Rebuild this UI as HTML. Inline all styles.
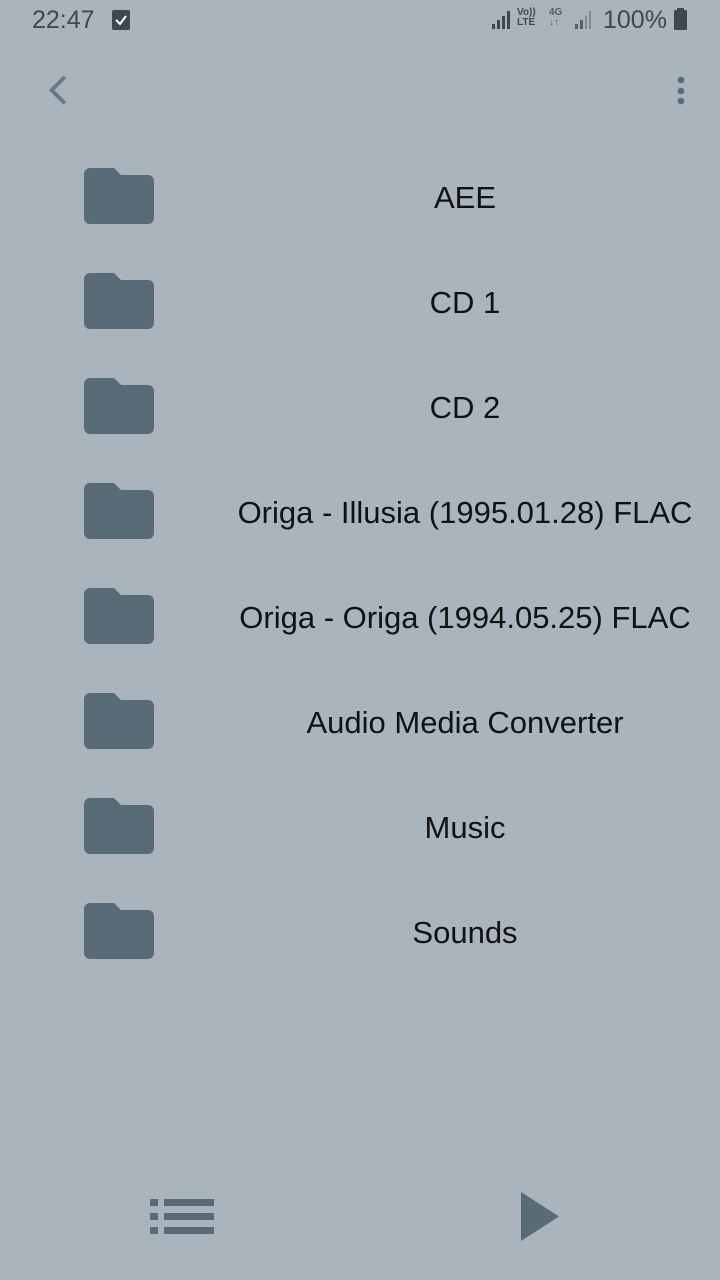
<!DOCTYPE html>
<html><head><meta charset="utf-8"><style>
html,body{margin:0;padding:0}
body{width:720px;height:1280px;background:#a9b4bd;position:relative;overflow:hidden;font-family:"Liberation Sans",sans-serif}
.t{position:absolute;color:#40484f}
.row{position:absolute;left:0;width:720px;height:105px}
.row svg{position:absolute;left:84px;top:17px}
.row span{position:absolute;left:210px;right:0;text-align:center;top:30px;font-size:31px;color:#111;line-height:36px;white-space:nowrap}
</style></head><body>
<div class="t" style="left:32px;top:6px;font-size:25px">22:47</div>
<svg style="position:absolute;left:112px;top:10px" width="18" height="20"><rect x="0" y="0" width="18" height="20" rx="2" fill="#40484f"/><path d="M4 10l4 4 6-8" stroke="#fff" stroke-width="2" fill="none"/></svg>
<svg style="position:absolute;left:490px;top:8px" width="22" height="22" fill="#40484f"><rect x="2" y="16" width="3" height="5"/><rect x="7" y="12" width="3" height="9"/><rect x="12" y="8" width="3" height="13"/><rect x="17" y="3" width="3" height="18"/></svg>
<div class="t" style="left:517px;top:8px;font-size:10px;line-height:10px;font-weight:bold">Vo))<br>LTE</div>
<div class="t" style="left:549px;top:8px;font-size:10px;line-height:10px;font-weight:bold;color:#55606a">4G<br>↓↑</div>
<svg style="position:absolute;left:573px;top:8px" width="22" height="22" fill="#55606a"><rect x="2" y="16" width="3" height="5"/><rect x="7" y="12" width="3" height="9"/><rect x="12" y="8" width="2" height="13" opacity=".5"/><rect x="16" y="3" width="2" height="18" opacity=".5"/></svg>
<div class="t" style="left:603px;top:6px;font-size:25px">100%</div>
<svg style="position:absolute;left:673px;top:8px" width="16" height="24" fill="#40484f"><rect x="4" y="0" width="7" height="3"/><rect x="1" y="2" width="13" height="20" rx="1"/></svg>
<svg style="position:absolute;left:46px;top:74px" width="26" height="34"><path d="M22 4L8 18l14 14" stroke="#677985" stroke-width="4" fill="none" transform="translate(-2,-1) scale(0.95)"/></svg>
<svg style="position:absolute;left:674px;top:76px" width="14" height="30" fill="#5a6b78"><circle cx="7" cy="4" r="3.3"/><circle cx="7" cy="15" r="3.3"/><circle cx="7" cy="25" r="3.3"/></svg>

<div class="row" style="top:150px"><svg width="70" height="57"><path d="M6 1h24l7 7h27a6 6 0 0 1 6 6v37a6 6 0 0 1-6 6H6a6 6 0 0 1-6-6V7a6 6 0 0 1 6-6z" fill="#5a6b78"/></svg><span>AEE</span></div>
<div class="row" style="top:255px"><svg width="70" height="57"><path d="M6 1h24l7 7h27a6 6 0 0 1 6 6v37a6 6 0 0 1-6 6H6a6 6 0 0 1-6-6V7a6 6 0 0 1 6-6z" fill="#5a6b78"/></svg><span>CD 1</span></div>
<div class="row" style="top:360px"><svg width="70" height="57"><path d="M6 1h24l7 7h27a6 6 0 0 1 6 6v37a6 6 0 0 1-6 6H6a6 6 0 0 1-6-6V7a6 6 0 0 1 6-6z" fill="#5a6b78"/></svg><span>CD 2</span></div>
<div class="row" style="top:465px"><svg width="70" height="57"><path d="M6 1h24l7 7h27a6 6 0 0 1 6 6v37a6 6 0 0 1-6 6H6a6 6 0 0 1-6-6V7a6 6 0 0 1 6-6z" fill="#5a6b78"/></svg><span>Origa - Illusia (1995.01.28) FLAC</span></div>
<div class="row" style="top:570px"><svg width="70" height="57"><path d="M6 1h24l7 7h27a6 6 0 0 1 6 6v37a6 6 0 0 1-6 6H6a6 6 0 0 1-6-6V7a6 6 0 0 1 6-6z" fill="#5a6b78"/></svg><span>Origa - Origa (1994.05.25) FLAC</span></div>
<div class="row" style="top:675px"><svg width="70" height="57"><path d="M6 1h24l7 7h27a6 6 0 0 1 6 6v37a6 6 0 0 1-6 6H6a6 6 0 0 1-6-6V7a6 6 0 0 1 6-6z" fill="#5a6b78"/></svg><span>Audio Media Converter</span></div>
<div class="row" style="top:780px"><svg width="70" height="57"><path d="M6 1h24l7 7h27a6 6 0 0 1 6 6v37a6 6 0 0 1-6 6H6a6 6 0 0 1-6-6V7a6 6 0 0 1 6-6z" fill="#5a6b78"/></svg><span>Music</span></div>
<div class="row" style="top:885px"><svg width="70" height="57"><path d="M6 1h24l7 7h27a6 6 0 0 1 6 6v37a6 6 0 0 1-6 6H6a6 6 0 0 1-6-6V7a6 6 0 0 1 6-6z" fill="#5a6b78"/></svg><span>Sounds</span></div>

<svg style="position:absolute;left:150px;top:1199px" width="64" height="36" fill="#5a6b78"><rect x="0" y="0" width="8" height="7"/><rect x="14" y="0" width="50" height="7"/><rect x="0" y="14" width="8" height="7"/><rect x="14" y="14" width="50" height="7"/><rect x="0" y="28" width="8" height="7"/><rect x="14" y="28" width="50" height="7"/></svg>
<svg style="position:absolute;left:521px;top:1192px" width="40" height="50"><path d="M0 0L38 24.5L0 49z" fill="#5a6b78"/></svg>
</body></html>
